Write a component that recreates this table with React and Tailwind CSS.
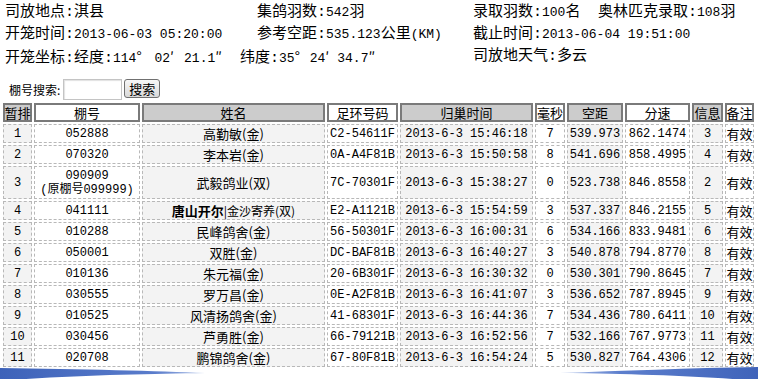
import React from "react";

const rows = [
  ["1", ["052888"], "高勤敏(金)", "C2-54611F", "2013-6-3 15:46:18", "7", "539.973", "862.1474", "3", "有效"],
  ["2", ["070320"], "李本岩(金)", "0A-A4F81B", "2013-6-3 15:50:58", "8", "541.696", "858.4995", "4", "有效"],
  ["3", ["090909", "(原棚号099999)"], "武毅鸽业(双)", "7C-70301F", "2013-6-3 15:38:27", "0", "523.738", "846.8558", "2", "有效"],
  ["4", ["041111"], "SPECIAL", "E2-A1121B", "2013-6-3 15:54:59", "3", "537.337", "846.2155", "5", "有效"],
  ["5", ["010288"], "民峰鸽舍(金)", "56-50301F", "2013-6-3 16:00:31", "6", "534.166", "833.9481", "6", "有效"],
  ["6", ["050001"], "双胜(金)", "DC-BAF81B", "2013-6-3 16:40:27", "3", "540.878", "794.8770", "8", "有效"],
  ["7", ["010136"], "朱元福(金)", "20-6B301F", "2013-6-3 16:30:32", "0", "530.301", "790.8645", "7", "有效"],
  ["8", ["030555"], "罗万昌(金)", "0E-A2F81B", "2013-6-3 16:41:07", "3", "536.652", "787.8945", "9", "有效"],
  ["9", ["010525"], "风清扬鸽舍(金)", "41-68301F", "2013-6-3 16:44:36", "7", "534.436", "780.6411", "10", "有效"],
  ["10", ["030456"], "芦勇胜(金)", "66-79121B", "2013-6-3 16:52:56", "7", "532.166", "767.9773", "11", "有效"],
  ["11", ["020708"], "鹏锦鸽舍(金)", "67-80F81B", "2013-6-3 16:54:24", "5", "530.827", "764.4306", "12", "有效"],
];

const headers = ["暂排", "棚号", "姓名", "足环号码", "归巢时间", "毫秒", "空距", "分速", "信息", "备注"];

const MONO = "font-['Liberation_Mono','Noto_Sans_CJK_SC',monospace]";
const CJK = "font-['Noto_Sans_CJK_SC','Liberation_Sans',sans-serif]";

function N({ children }) {
  return <span className="text-[13px]">{children}</span>;
}

function Sym({ children, w }) {
  return (
    <span className={`inline-block ${w} text-[14px] ${CJK}`}>{children}</span>
  );
}

function HeaderCell({ text, i }) {
  const bg = i % 2 === 0 ? "bg-[#cccccc]" : "bg-white";
  return (
    <div
      className={`h-[19px] flex items-center justify-center border-2 border-[#7a7a7a] ${bg} text-[13px] leading-[15px] whitespace-nowrap ${CJK}`}
    >
      {text}
    </div>
  );
}

function BodyCell({ i, children }) {
  const bg = i % 2 === 0 ? "bg-[#f3f3f3]" : "bg-white";
  const font = i === 2 || i === 9 ? `text-[13px] ${CJK}` : `text-[12px] ${MONO}`;
  return (
    <div
      className={`flex flex-col items-center justify-center border border-dashed border-[#b8b8b8] ${bg} ${font} leading-[14px] pt-[2px] pb-[1px] whitespace-nowrap text-center`}
    >
      {children}
    </div>
  );
}

export default function App() {
  return (
    <div className="w-[758px] h-[379px] overflow-hidden bg-white text-black relative">
      <div
        className={`pl-[5px] pt-[2px] grid grid-cols-[252px_216px_125px_1fr] auto-rows-[22px] items-center text-[15px] leading-[22px] whitespace-nowrap ${MONO}`}
      >
        <div>司放地点:淇县</div>
        <div>集鸽羽数:<N>542</N>羽</div>
        <div>录取羽数:<N>100</N>名</div>
        <div>奥林匹克录取:<N>108</N>羽</div>

        <div>开笼时间:<N>2013-06-03 05:20:00</N></div>
        <div>参考空距:<N>535.123</N>公里<N>(KM)</N></div>
        <div>截止时间:<N>2013-06-04 19:51:00</N></div>
        <div></div>

        <div className="col-span-2">
          <span className="inline-block w-[235px]">
            开笼坐标:经度:<N>114</N>
            <Sym w="w-[18px]">°</Sym>
            <N>02</N>
            <Sym w="w-[14px]">′</Sym>
            <N>21.1</N>
            <Sym w="w-[10px]">″</Sym>
          </span>
          纬度:<N>35</N>
          <Sym w="w-[15px]">°</Sym>
          <N>24</N>
          <Sym w="w-[12px]">′</Sym>
          <N>34.7</N>
          <Sym w="w-[10px]">″</Sym>
        </div>
        <div>司放地天气:多云</div>
        <div></div>
      </div>

      <div className={`mt-[11px] pl-[9px] h-[21px] flex items-center text-[12px] ${CJK}`}>
        <span>棚号搜索:</span>
        <div className="ml-[3px] w-[59px] h-[21px] border border-[#c4c4c4] bg-white shadow-[inset_1px_1px_1px_rgba(0,0,0,0.12)]"></div>
        <div className="ml-[2px] self-start w-[36px] h-[19px] flex items-center justify-center border border-[#707070] rounded-[3px] bg-linear-to-b from-[#f7f7f7] to-[#d9d9d9] text-[13px] leading-[15px]">
          搜索
        </div>
      </div>

      <div className="ml-[3px] mt-[3px] grid grid-cols-[29px_106px_183px_71px_133px_30px_56px_65px_31px_29px] gap-[2px]">
        {headers.map((h, i) => (
          <HeaderCell key={h} text={h} i={i} />
        ))}
        {rows.map((r) => (
          <React.Fragment key={r[0]}>
            <BodyCell i={0}>{r[0]}</BodyCell>
            <BodyCell i={1}>
              {r[1].map((l) => (
                <span key={l}>{l}</span>
              ))}
            </BodyCell>
            <BodyCell i={2}>
              {r[2] === "SPECIAL" ? (
                <span>
                  <span className="font-bold text-[13px]">唐山开尔</span>
                  <span className="text-[12px]">|金沙寄养(双)</span>
                </span>
              ) : (
                r[2]
              )}
            </BodyCell>
            <BodyCell i={3}>{r[3]}</BodyCell>
            <BodyCell i={4}>{r[4]}</BodyCell>
            <BodyCell i={5}>{r[5]}</BodyCell>
            <BodyCell i={6}>{r[6]}</BodyCell>
            <BodyCell i={7}>{r[7]}</BodyCell>
            <BodyCell i={8}>{r[8]}</BodyCell>
            <BodyCell i={9}>{r[9]}</BodyCell>
          </React.Fragment>
        ))}
      </div>

      <svg width="758" height="14" viewBox="0 0 758 14" className="block">
        <defs>
          <linearGradient id="lg" x1="0" y1="0" x2="1" y2="0">
            <stop offset="0" stopColor="#3d62b9" />
            <stop offset="0.75" stopColor="#5a7ccb" />
            <stop offset="1" stopColor="#a9bde6" />
          </linearGradient>
          <linearGradient id="rg" x1="0" y1="0" x2="1" y2="0">
            <stop offset="0" stopColor="#b3c4ea" />
            <stop offset="0.3" stopColor="#5d7fcd" />
            <stop offset="1" stopColor="#3f63ba" />
          </linearGradient>
        </defs>
        <path d="M0 1 C 80 2, 160 4, 205 6 C 150 7, 70 8, 0 14 Z" fill="url(#lg)" />
        <path d="M758 0 C 690 1, 620 4, 560 6 C 640 7, 700 9, 758 14 Z" fill="url(#rg)" />
      </svg>
    </div>
  );
}
